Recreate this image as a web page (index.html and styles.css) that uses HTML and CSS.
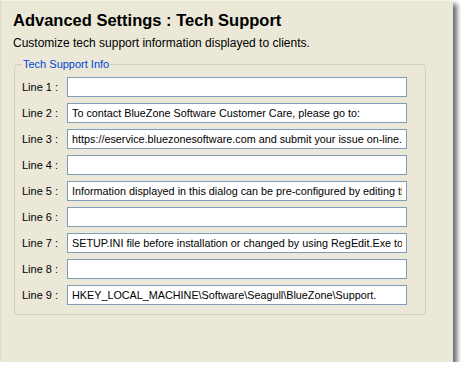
FILE: index.html
```html
<!DOCTYPE html>
<html lang="en">
<head>
    <meta charset="UTF-8">
    <title>Advanced Settings : Tech Support</title>
    <link rel="stylesheet" href="styles.css">
</head>
<body>
    <div class="panel">
        <div class="page-title">Advanced Settings : Tech Support</div>
        <div class="page-desc">Customize tech support information displayed to clients.</div>

        <fieldset class="info-group">
            <legend>Tech Support Info</legend>
            <div class="line-grid">
                <label>Line 1 :</label>
                <input type="text" value="">
                <label>Line 2 :</label>
                <input type="text" value="To contact BlueZone Software Customer Care, please go to:">
                <label>Line 3 :</label>
                <input type="text" value="https://eservice.bluezonesoftware.com and submit your issue on-line.">
                <label>Line 4 :</label>
                <input type="text" value="">
                <label>Line 5 :</label>
                <input type="text" value="Information displayed in this dialog can be pre-configured by editing the">
                <label>Line 6 :</label>
                <input type="text" value="">
                <label>Line 7 :</label>
                <input type="text" value="SETUP.INI file before installation or changed by using RegEdit.Exe to edit">
                <label>Line 8 :</label>
                <input type="text" value="">
                <label>Line 9 :</label>
                <input type="text" value="HKEY_LOCAL_MACHINE\Software\Seagull\BlueZone\Support.">
            </div>
        </fieldset>
    </div>
</body>
</html>
```

FILE: styles.css
```css
body {
    margin: 0;
    background-color: white;
    font-family: 'Liberation Sans', Arial, sans-serif;
    color: black;
}
.panel {
    width: 453px;
    height: 362px;
    box-sizing: border-box;
    padding: 9px 0 0 12px;
    background-color: #ebe8d8;
    border-top: 1px solid #f3f2ec;
    border-left: 1px solid #dedcd2;
    box-shadow: 4px 4px 5px rgba(0, 0, 0, 0.6);
}
.page-title {
    font-size: 16.5px;
    font-weight: bold;
    line-height: 20px;
    height: 19px;
}
.page-desc {
    font-size: 12px;
    line-height: 14px;
    margin-top: 7px;
}
.info-group {
    width: 412px;
    box-sizing: border-box;
    margin: 8px 0 0 1px;
    padding: 6px 18px 9px 7px;
    border: 1px solid #d0d0bf;
    border-radius: 4px;
}
.info-group legend {
    font-size: 11px;
    line-height: 13px;
    color: #0046d5;
    padding: 0 1px;
    margin-left: 0;
}
.line-grid {
    display: grid;
    grid-template-columns: 45px 340px;
    grid-auto-rows: 20px;
    row-gap: 6px;
    align-items: center;
}
.line-grid label {
    font-size: 11px;
}
.line-grid input {
    box-sizing: border-box;
    width: 340px;
    height: 20px;
    margin: 0;
    padding: 0 4px;
    border: 1px solid #7f9db9;
    background-color: white;
    font-family: 'Liberation Sans', Arial, sans-serif;
    font-size: 10.8px;
    color: black;
    outline: none;
}
```
